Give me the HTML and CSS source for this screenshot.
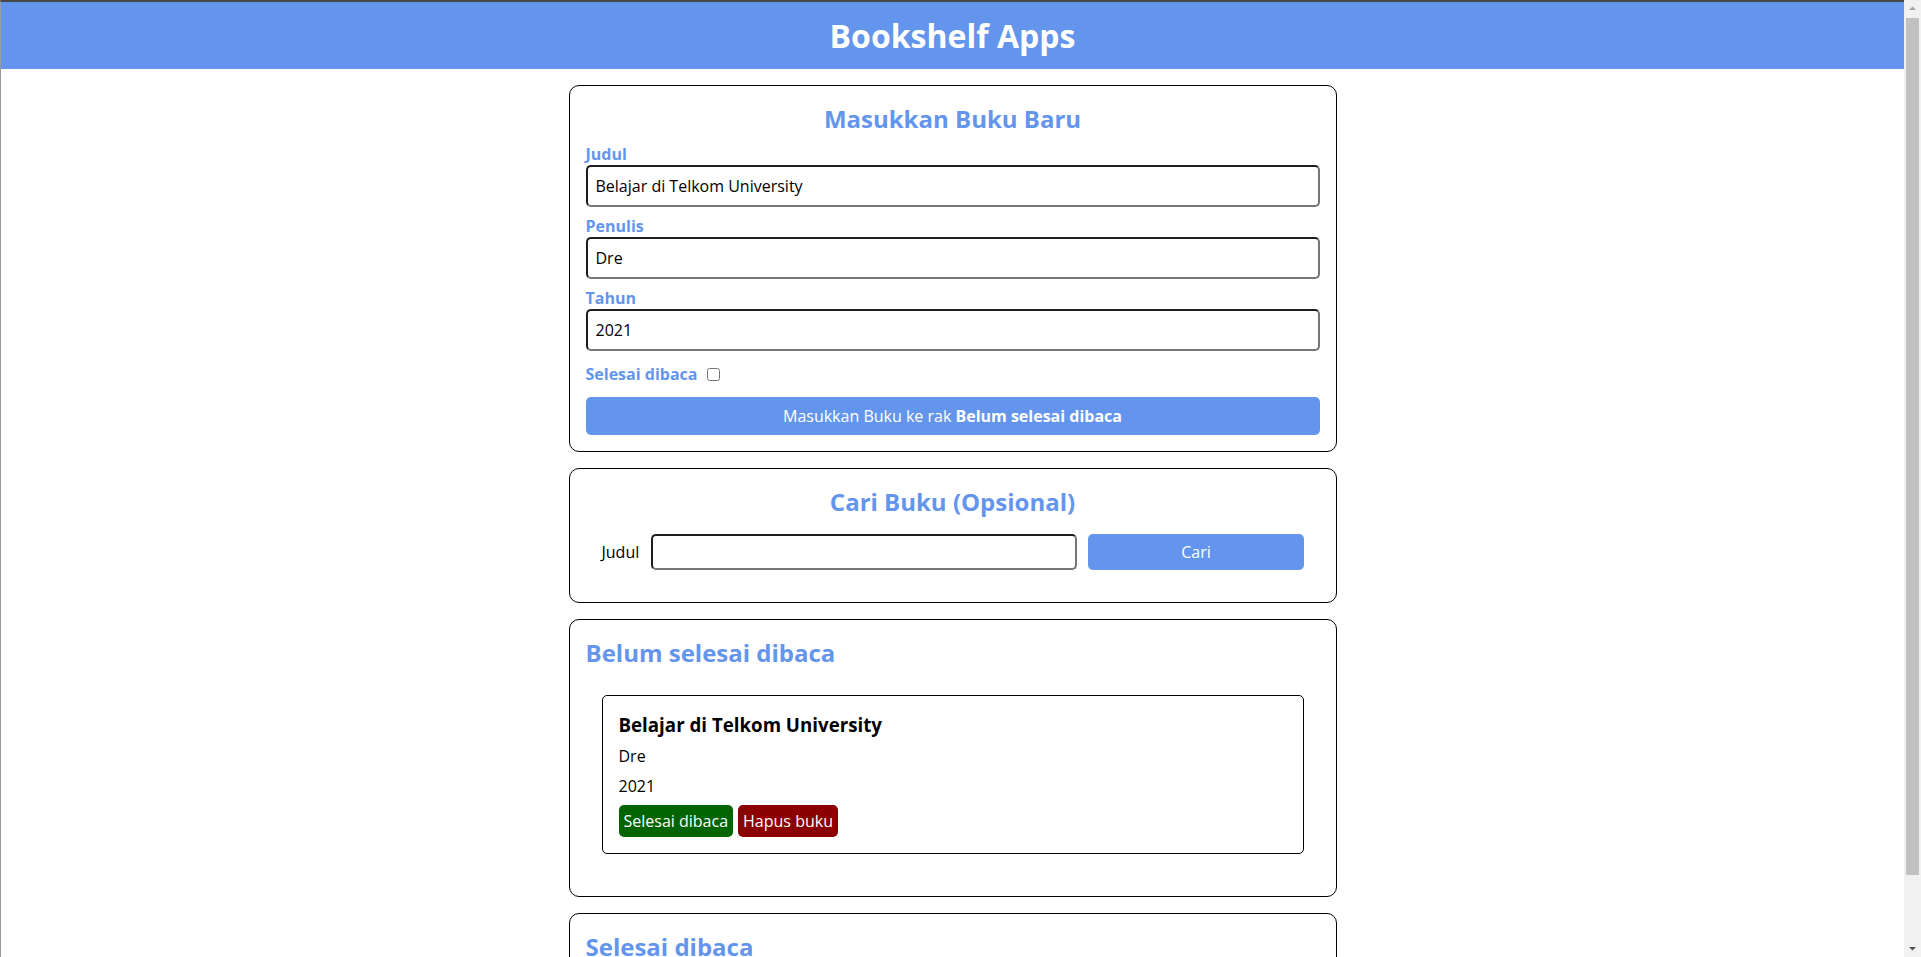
FILE: index.html
```html
<!DOCTYPE html>
<html lang="id">
<head>
<meta charset="utf-8">
<title>Bookshelf Apps</title>
<link rel="stylesheet" href="styles.css">
</head>
<body>
<header class="head">
  <h1 class="head-title">Bookshelf Apps</h1>
</header>
<main class="main">
  <section class="card">
    <h2 class="card-title card-title-center card-title-gap">Masukkan Buku Baru</h2>
    <form class="book-form">
      <div class="field">
        <label class="field-label" for="inputBookTitle">Judul</label>
        <input class="field-input" id="inputBookTitle" type="text" value="Belajar di Telkom University">
      </div>
      <div class="field">
        <label class="field-label" for="inputBookAuthor">Penulis</label>
        <input class="field-input" id="inputBookAuthor" type="text" value="Dre">
      </div>
      <div class="field">
        <label class="field-label" for="inputBookYear">Tahun</label>
        <input class="field-input" id="inputBookYear" type="number" value="2021">
      </div>
      <div class="check-row">
        <label class="field-label" for="inputBookIsComplete">Selesai dibaca</label>
        <input class="check-box" id="inputBookIsComplete" type="checkbox">
      </div>
      <button class="submit-btn" type="button">Masukkan Buku ke rak <span class="submit-strong">Belum selesai dibaca</span></button>
    </form>
  </section>

  <section class="card">
    <h2 class="card-title card-title-center">Cari Buku (Opsional)</h2>
    <form class="search-form">
      <label class="search-label" for="searchBookTitle">Judul</label>
      <input class="search-input" id="searchBookTitle" type="text">
      <button class="search-btn" type="button">Cari</button>
    </form>
  </section>

  <section class="card">
    <h2 class="card-title">Belum selesai dibaca</h2>
    <div class="book-list">
      <article class="book-item">
        <h3 class="book-title">Belajar di Telkom University</h3>
        <p class="book-meta">Dre</p>
        <p class="book-meta">2021</p>
        <div class="book-actions">
          <button class="btn-green" type="button">Selesai dibaca</button>
          <button class="btn-red" type="button">Hapus buku</button>
        </div>
      </article>
    </div>
  </section>

  <section class="card">
    <h2 class="card-title">Selesai dibaca</h2>
    <div class="book-list"></div>
  </section>
</main>
<div class="fake-scrollbar" aria-hidden="true">
  <svg class="scroll-arrow" width="17" height="17" viewBox="0 0 17 17"><path d="M5 10 L8.5 6.5 L12 10 Z" fill="#a3a3a3"/></svg>
  <div class="scroll-track"><div class="scroll-thumb"></div></div>
  <svg class="scroll-arrow" width="17" height="17" viewBox="0 0 17 17"><path d="M5 7 L8.5 10.5 L12 7 Z" fill="#505050"/></svg>
</div>
</body>
</html>
```

FILE: styles.css
```css
html {
  border-top: 2px solid #474747;
  border-left: 1px solid #9a9a9a;
}

* {
  box-sizing: border-box;
}

body {
  margin: 0 17px 0 0;
  font-family: "Open Sans", "Noto Sans", sans-serif;
  font-size: 16px;
  color: #000;
  background: #fff;
}

.fake-scrollbar {
  position: fixed;
  top: 0;
  right: 0;
  bottom: 0;
  width: 17px;
  display: flex;
  flex-direction: column;
  background: #f1f1f1;
}

.scroll-arrow {
  display: block;
  flex: none;
}

.scroll-track {
  flex: 1;
  padding: 1px 2px;
}

.scroll-thumb {
  height: 857px;
  background: #c1c1c1;
}

.head {
  background: #6495ed;
  padding: 12px 0;
  text-align: center;
}

.head-title {
  margin: 0;
  font-size: 32px;
  line-height: 43px;
  font-weight: 700;
  color: #fff;
}

.main {
  width: 768px;
  margin: 0 auto;
  padding-top: 16px;
}

.card {
  border: 1px solid #000;
  border-radius: 10px;
  padding: 16px;
  margin-bottom: 16px;
}

.card-title {
  margin: 0;
  font-size: 24px;
  font-weight: 700;
  color: #6495ed;
}

.card-title-center {
  text-align: center;
}

.card-title-gap {
  margin-bottom: 8px;
}

.field {
  margin-bottom: 8px;
}

.field-label {
  display: block;
  font-weight: 700;
  color: #6495ed;
}

.field-input {
  display: block;
  width: 100%;
  padding: 8px;
  font-family: inherit;
  font-size: 16px;
  color: #000;
  border-width: 2px;
  border-style: solid;
  border-color: #1e1e1e #767676 #767676 #1e1e1e;
  border-radius: 5px;
  background: #fff;
}

.field-input[type="number"]::-webkit-inner-spin-button,
.field-input[type="number"]::-webkit-outer-spin-button {
  -webkit-appearance: none;
  margin: 0;
}

.check-row {
  display: flex;
  align-items: center;
  margin: 12px 0 12px;
}

.check-box {
  width: 13px;
  height: 13px;
  margin: 0 0 0 10px;
}

.submit-btn {
  display: block;
  width: 100%;
  padding: 8px 0;
  font-family: inherit;
  font-size: 16px;
  line-height: normal;
  color: #fff;
  background: #6495ed;
  border: 0;
  border-radius: 5px;
}

.submit-strong {
  font-weight: 700;
}

.search-form {
  display: flex;
  align-items: center;
  padding: 16px;
}

.search-label {
  margin-right: 12px;
}

.search-input {
  flex: 2 1 0;
  min-width: 0;
  height: 36px;
  margin-right: 11px;
  padding: 0 8px;
  font-family: inherit;
  font-size: 16px;
  border-width: 2px;
  border-style: solid;
  border-color: #1e1e1e #767676 #767676 #1e1e1e;
  border-radius: 5px;
  background: #fff;
}

.search-btn {
  flex: 1 1 0;
  height: 36px;
  font-family: inherit;
  font-size: 16px;
  color: #fff;
  background: #6495ed;
  border: 0;
  border-radius: 5px;
}

.book-list {
  padding: 16px;
}

.book-item {
  margin: 10px 0;
  padding: 16px;
  border: 1px solid #000;
  border-radius: 5px;
}

.book-title {
  margin: 0 0 8px;
  font-size: 18.72px;
  font-weight: 700;
}

.book-meta {
  margin: 0 0 8px;
}

.book-actions {
  display: flex;
  gap: 5px;
}

.btn-green,
.btn-red {
  padding: 5px;
  font-family: inherit;
  font-size: 16px;
  line-height: normal;
  color: #fff;
  border: 0;
  border-radius: 5px;
}

.btn-green {
  background: #006400;
}

.btn-red {
  background: #8b0000;
}
```
